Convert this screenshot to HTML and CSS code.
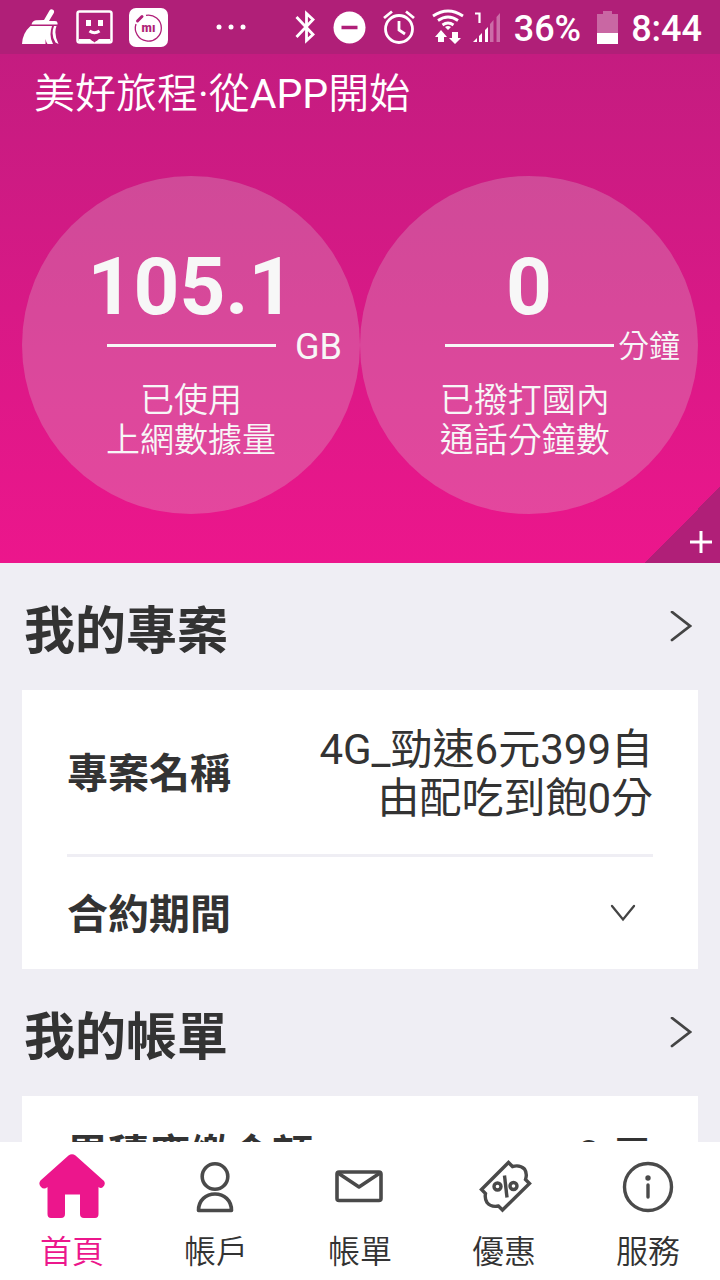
FILE: index.html
```html
<!DOCTYPE html>
<html lang="zh-Hant">
<head>
<meta charset="utf-8">
<meta name="viewport" content="width=device-width, initial-scale=1">
<title>首頁</title>
<link rel="stylesheet" href="styles.css">
</head>
<body class="app">
<div class="status-bar">
  <div class="status-group status-left">
    <svg width="37" height="36" viewBox="0 0 37 36" fill="#fff"><path d="M22 11 27.500 1.500Q29-.5 31 .8 32.700 2 31.800 4L27 12H33Q36 12 35.500 15V15.500H9.500Q10 12 14 11.300ZM8.500 17H30Q26.500 27 31 35H25.500Q24 33 23.500 30V35H0Q.5 24 8.500 17ZM32 17H34.500Q31.500 25 36.500 35L33.500 33.500Q28.500 26 32 17Z"/></svg>
    <svg class="face-icon" width="37" height="36" viewBox="0 0 37 36"><rect x="1.500" y="2.500" width="34" height="31" rx="2" fill="none" stroke="#fff" stroke-width="2.500"/><path fill="#fff" d="M3 30H14L18.500 34 23 30H34V33H3ZM10 11H15V17H10ZM22 11H27V17H22Z"/><path d="M13.500 22Q18.500 25.500 23.500 22" fill="none" stroke="#fff" stroke-width="3"/><path fill="#b01f78" d="M14.500 29.500H22.500L18.500 33.500Z"/></svg>
    <svg class="mi-icon" width="39" height="39" viewBox="0 0 39 39"><rect width="39" height="39" rx="7" fill="#fff"/><path d="M17 7.300A13 13 0 1 1 7 16" fill="none" stroke="#b01f78" stroke-width="1.300"/><path d="M8.500 13 13 8.500" stroke="#b01f78" stroke-width="3" stroke-linecap="round"/><text class="mi-text" x="19.500" y="23.500" text-anchor="middle">mı</text></svg>
    <svg class="dots-icon" width="30" height="6" viewBox="0 0 30 6" fill="#fff"><circle cx="3" cy="3" r="2.500"/><circle cx="15" cy="3" r="2.500"/><circle cx="27" cy="3" r="2.500"/></svg>
  </div>
  <div class="status-group status-right">
    <svg width="21" height="34" viewBox="0 0 21 34" fill="none" stroke="#fff" stroke-width="2.800"><path d="M1.500 7 18 24.500 11.500 30.500V3.500L18 9.500 1.500 27"/></svg>
    <svg class="gap-17" width="33" height="33" viewBox="0 0 33 33"><circle cx="16.500" cy="16.500" r="16" fill="#fff"/><path d="M8.500 16.500H24.500" stroke="#b01f78" stroke-width="3.500"/></svg>
    <svg class="gap-17" width="32" height="34" viewBox="0 0 32 34" fill="none" stroke="#fff" stroke-width="2.800"><circle cx="16" cy="19" r="13.500"/><path d="M16 11V20L22 24M1 8 9 1.500M31 8 23 1.500"/></svg>
    <svg class="gap-17" width="32" height="36" viewBox="0 0 32 36"><g fill="none" stroke="#fff" stroke-width="2.800"><path d="M1 7Q16-3 31 7M6 11.500Q16 4.500 26 11.500M10.500 16Q16 12 21.500 16"/></g><path fill="#fff" d="M13 18Q16 16 19 18L16 21ZM9 21 15 28H12V33H6V28H3ZM20 23H26V29H29L23 35 17 29H20Z"/></svg>
    <svg class="gap-8" width="29" height="34" viewBox="0 0 29 34" fill="#fff"><path d="M3 3.500H7.500V13" fill="none" stroke="#fff" stroke-width="2.200"/><path d="M1 32 5 28V32ZM7 26 10 23V32H7ZM13 20 16 17V32H13Z"/><path opacity=".35" d="M18 14 21.500 10V32H18ZM24.500 7 28 3V32H24.500Z"/></svg>
    <span class="status-text gap-13">36%</span>
    <svg class="gap-16" width="21" height="33" viewBox="0 0 21 33" fill="#fff"><path opacity=".32" d="M6 0H15V3H21V22H0V3H6Z"/><path d="M0 22H21V33H0Z"/></svg>
    <span class="status-text gap-13">8:44</span>
  </div>
</div>
<header class="hero">
  <h1 class="hero-title">美好旅程<span class="latin">·</span>從<span class="latin">APP</span>開始</h1>
  <div class="meters">
    <section class="meter">
      <strong class="meter-value">105.1</strong>
      <div class="meter-scale"><span class="meter-line"></span><span class="meter-unit latin">GB</span></div>
      <p class="meter-label">已使用<br>上網數據量</p>
    </section>
    <section class="meter">
      <strong class="meter-value">0</strong>
      <div class="meter-scale"><span class="meter-line"></span><span class="meter-unit">分鐘</span></div>
      <p class="meter-label">已撥打國內&nbsp;<br>通話分鐘數&nbsp;</p>
    </section>
  </div>
  <button class="corner-button" type="button" aria-label="+"><svg width="22" height="22" viewBox="0 0 22 22" stroke="#fff" stroke-width="3"><path d="M0 11H22M11 0V22"/></svg></button>
</header>
<main class="content">
  <section class="panel">
    <h2 class="panel-heading"><a class="panel-link" href="#plan"><span class="panel-title">我的專案</span><svg width="22" height="32" viewBox="0 0 22 32" fill="none" stroke="#444" stroke-width="2.800" stroke-linecap="round"><path d="M2 1 20 15 2 29"/></svg></a></h2>
    <div class="card">
      <div class="row row-plan"><span class="row-label">專案名稱</span><span class="row-value">4G_勁速6元399自由配吃到飽0分</span></div>
      <button class="row row-toggle" type="button"><span class="row-label">合約期間</span><svg width="26" height="18" viewBox="0 0 26 18" fill="none" stroke="#444" stroke-width="2.300" stroke-linecap="round"><path d="M2 2 13 15.500 24 2"/></svg></button>
    </div>
  </section>
  <section class="panel">
    <h2 class="panel-heading"><a class="panel-link" href="#bill"><span class="panel-title">我的帳單</span><svg width="22" height="32" viewBox="0 0 22 32" fill="none" stroke="#444" stroke-width="2.800" stroke-linecap="round"><path d="M2 1 20 15 2 29"/></svg></a></h2>
    <div class="card">
      <div class="row row-bill"><span class="row-label">累積應繳金額</span><span class="row-value">0 元</span></div>
    </div>
  </section>
</main>
<nav class="tabs">
  <a class="tab tab-active" href="#home"><svg class="tab-icon" width="66" height="66" viewBox="0 0 66 66" fill="#ec168c"><path d="M29.500 1.500Q33-1 36.500 1.500L65 27Q67 30 64 33 62 35 59.500 33V60Q59.500 64 56 64H45Q41 64 41 60V40.500H26V60Q26 64 22 64H12Q8.500 64 8.500 60V33Q5 36 2 33-1 30 1.500 26.500Z"/></svg>首頁</a>
  <a class="tab" href="#account"><svg class="tab-icon" width="66" height="66" viewBox="0 0 66 66" fill="none" stroke="#4a4a4a" stroke-width="3.600" stroke-linejoin="round"><circle cx="32" cy="22.500" r="12.800"/><path d="M15.500 56.500C15.500 46 23 40 32 40S48.500 46 48.500 56.500Z"/></svg>帳戶</a>
  <a class="tab" href="#billing"><svg class="tab-icon" width="66" height="66" viewBox="0 0 66 66" fill="none" stroke="#4a4a4a" stroke-width="3.600" stroke-linejoin="round"><rect x="10" y="18" width="44" height="28.500" rx="2"/><path d="M11 19 32 33 53 19"/></svg>帳單</a>
  <a class="tab" href="#offers"><svg class="tab-icon" width="66" height="66" viewBox="0 0 66 66" fill="none" stroke="#4a4a4a" stroke-width="3.400"><path d="M10.500 35.500 37.500 8.500 41.500 12.500Q49 10.500 53.500 15 56.500 19.500 54.500 25.500L58.500 29.500 31.500 56 27.500 52Q20 53.500 16 48.500 13.500 44.500 14.500 39.500Z"/><circle cx="26.500" cy="32.500" r="3.500"/><circle cx="42.500" cy="32" r="3.500"/><path d="M33.500 21.500 36 43.500"/></svg>優惠</a>
  <a class="tab" href="#service"><svg class="tab-icon" width="66" height="66" viewBox="0 0 66 66" fill="none" stroke="#4a4a4a" stroke-width="3.400"><circle cx="33" cy="33" r="23.500"/><path d="M33 31V43" stroke-linecap="round"/><circle cx="33" cy="24" r="2.700" fill="#4a4a4a" stroke="none"/></svg>服務</a>
</nav>
</body>
</html>
```
FILE: styles.css
```css
* { box-sizing: border-box; }

.app {
  margin: 0;
  height: 100vh;
  display: flex;
  flex-direction: column;
  background: #efeef4;
  color: #333;
  font-family: Roboto, "Noto Sans CJK TC", sans-serif;
}

.status-bar {
  flex: none;
  height: 54px;
  padding: 0 18px 0 22px;
  display: flex;
  justify-content: space-between;
  align-items: center;
  background: #b01f78;
  color: #fff;
}
.status-group { display: flex; align-items: center; }
.face-icon { margin-left: 17px; }
.mi-icon { margin-left: 16px; }
.dots-icon { margin-left: 48px; }
.gap-8 { margin-left: 8px; }
.gap-13 { margin-left: 13px; }
.gap-16 { margin-left: 16px; }
.gap-17 { margin-left: 17px; }
.status-text {
  padding-top: 4px;
  font-size: 36px;
  font-weight: 500;
  line-height: 50px;
}
.mi-text { font: 900 12px Roboto, sans-serif; fill: #b01f78; }

.hero {
  flex: none;
  position: relative;
  padding: 10px 22px 49px;
  background: linear-gradient(#c41c80, #ec168c);
  color: #fff;
}
.hero-title {
  margin: 0;
  padding-left: 12px;
  font-size: 41px;
  font-weight: 350;
  line-height: 60px;
}
.latin { font-weight: 400; }
.meters { display: flex; margin-top: 52px; }
.meter {
  flex: 1;
  aspect-ratio: 1;
  padding-top: 72px;
  border-radius: 50%;
  background: rgba(214, 214, 214, 0.25);
  color: #f7f7f7;
  text-align: center;
}
.meter-value {
  display: block;
  font-size: 80px;
  font-weight: 700;
  line-height: 78px;
}
.meter-scale {
  display: grid;
  grid-template-columns: 1fr 2fr 1fr;
  align-items: center;
}
.meter-line { grid-column: 2; height: 3px; background: #f7f7f7; }
.meter-unit {
  justify-self: end;
  padding: 4px 18px 0 0;
  font-size: 31px;
  font-weight: 350;
  line-height: 34px;
  white-space: nowrap;
}
.meter-unit.latin { font-size: 36px; font-weight: 400; }
.meter-label {
  margin: 16px 0 0;
  font-size: 34px;
  font-weight: 350;
  line-height: 40px;
}
.corner-button {
  position: absolute;
  right: 0;
  bottom: 0;
  width: 76px;
  height: 76px;
  padding: 0 8px 10px 0;
  display: flex;
  justify-content: flex-end;
  align-items: flex-end;
  border: 0;
  background: linear-gradient(135deg, transparent 50%, #b01f78 50%);
}

.content {
  flex: 1;
  min-height: 0;
  padding: 0 22px;
  overflow-y: auto;
  scrollbar-width: none;
}
.panel-heading { margin: 0; font-size: 51px; font-weight: 700; }
.panel-link {
  display: flex;
  align-items: center;
  justify-content: space-between;
  padding: 0 6px 0 2px;
  color: inherit;
  text-decoration: none;
}
.panel-title { padding-top: 10px; line-height: 117px; }
.card { padding: 0 45px; background: #fff; }
.row {
  width: 100%;
  display: flex;
  align-items: center;
  justify-content: space-between;
  font-size: 41px;
  line-height: 49px;
}
.row-label { padding-top: 5px; font-weight: 700; }
.row-value {
  max-width: 340px;
  padding-top: 5px;
  font-size: 42px;
  font-weight: 400;
  text-align: right;
}
.row-plan { padding: 30px 0 31px; border-bottom: 3px solid #efeef4; }
.row-toggle {
  padding: 29px 17px 29px 0;
  border: 0;
  background: none;
  color: inherit;
  font-family: inherit;
  text-align: left;
}
.row-bill { padding: 30px 0; }

.tabs {
  flex: none;
  display: flex;
  background: #fff;
}
.tab {
  flex: 1;
  padding-top: 12px;
  display: flex;
  flex-direction: column;
  align-items: center;
  gap: 4px;
  font-size: 32px;
  font-weight: 350;
  line-height: 56px;
  color: #333;
  text-decoration: none;
}
.tab-icon { flex: none; }
.tab-active { color: #ec168c; }
```
